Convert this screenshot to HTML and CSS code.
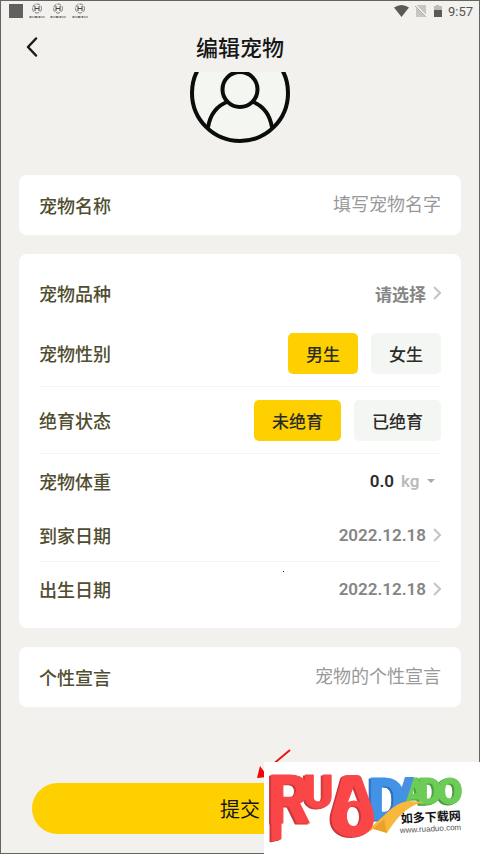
FILE: index.html
```html
<!DOCTYPE html>
<html lang="zh-CN">
<head>
<meta charset="utf-8">
<meta name="viewport" content="width=device-width, initial-scale=1">
<title>编辑宠物</title>
<link rel="stylesheet" href="styles.css">
</head>
<body>
<div class="screen">
  <div class="status">
    <svg class="status-left" width="84" height="18" viewBox="0 0 84 18" aria-hidden="true">
      <rect x="1" y="2" width="14" height="14" fill="#60605e"/>
      <g fill="none" stroke="#777" stroke-width="1">
        <g id="face">
          <circle cx="29" cy="6.500" r="4.500" stroke-dasharray="4 1"/>
          <path d="M27 4v5M31 4v5M27 6.500h4" stroke="#444"/>
          <path d="M21.500 15h15" stroke-dasharray="2 1 1 1 3 1" stroke="#777" stroke-width="2"/>
        </g>
        <use href="#face" x="21"/>
        <use href="#face" x="43"/>
      </g>
    </svg>
    <div class="status-right">
      <svg width="50" height="14" viewBox="0 0 50 14" aria-hidden="true">
        <path d="M1 3.500Q8.500 -1.500 16 3.500L8.500 13Z" fill="#5a5a58"/>
        <path d="M23 1h10v12H23z" fill="#c6c6c3"/>
        <path d="M22 1l12 12" stroke="#f2f1ee" stroke-width="2"/>
        <path d="M22 2l11 11" stroke="#aaa" stroke-width="1"/>
        <path d="M41 2h2V1h3v1h3v5h-8z" fill="#bbbbb8"/>
        <path d="M41 6h8v7h-8z" fill="#5a5a58"/>
      </svg>
      <span>9:57</span>
    </div>
  </div>
  <header class="topbar">
    <button class="back" type="button" aria-label="返回">
      <svg width="12" height="20" viewBox="0 0 12 20"><path d="M10 1.500L2 10l8 8.500" fill="none" stroke="#1b1b1b" stroke-width="2.500" stroke-linecap="round" stroke-linejoin="round"/></svg>
    </button>
    <h1>编辑宠物</h1>
  </header>
  <form class="form">
    <svg class="avatar" width="100" height="72" viewBox="190 72 100 72" role="img" aria-label="头像">
      <circle cx="240" cy="93" r="48" fill="#f3f6f1"/>
      <g fill="none" stroke="#0c0c0a" stroke-width="4">
        <circle cx="240" cy="93" r="48"/>
        <circle cx="240" cy="89.500" r="17.500"/>
        <path d="M208 127.500C210 115 216 106 228 101.500M272 127.500C270 115 264 106 252 101.500"/>
      </g>
    </svg>
    <section class="card single">
      <label for="name">宠物名称</label>
      <input id="name" type="text" placeholder="填写宠物名字">
    </section>
    <section class="card group">
      <div class="row">
        <span class="label">宠物品种</span>
        <button class="pick" type="button">请选择
          <svg class="chev" width="8" height="14" viewBox="0 0 8 14"><path d="M1 1l6 6-6 6"/></svg></button>
      </div>
      <div class="row tall lined">
        <span class="label">宠物性别</span>
        <div class="choices">
          <button class="choice on" type="button">男生</button>
          <button class="choice" type="button">女生</button>
        </div>
      </div>
      <div class="row tall lined">
        <span class="label">绝育状态</span>
        <div class="choices">
          <button class="choice on" type="button">未绝育</button>
          <button class="choice" type="button">已绝育</button>
        </div>
      </div>
      <div class="row">
        <label for="weight">宠物体重</label>
        <div class="weight">
          <input id="weight" type="text" value="0.0">
          <select aria-label="单位"><option>kg</option></select>
          <svg width="8" height="4" viewBox="0 0 8 4" aria-hidden="true"><path d="M0 0h8L4 4z" fill="#aaa"/></svg>
        </div>
      </div>
      <div class="row lined">
        <span class="label">到家日期</span>
        <button class="pick" type="button">2022.12.18
          <svg class="chev" width="8" height="14" viewBox="0 0 8 14"><path d="M1 1l6 6-6 6"/></svg></button>
      </div>
      <div class="row">
        <span class="label">出生日期</span>
        <button class="pick" type="button">2022.12.18
          <svg class="chev" width="8" height="14" viewBox="0 0 8 14"><path d="M1 1l6 6-6 6"/></svg></button>
      </div>
    </section>
    <section class="card single">
      <label for="motto">个性宣言</label>
      <input id="motto" type="text" placeholder="宠物的个性宣言">
    </section>
    <button class="submit" type="submit">提交</button>
  </form>
  <i class="dot"></i>
</div>
<div class="overlay">
  <svg class="arrow" width="36" height="30" viewBox="0 0 36 30" aria-hidden="true">
    <path d="M34 1L9 22" stroke="#e81717" stroke-width="2"/>
    <path d="M1 29L4 17l8 11z" fill="#f00808"/>
  </svg>
  <svg class="brand" width="216" height="92" viewBox="0 0 216 92" role="img" aria-label="如多下载网">
    <rect width="216" height="92" fill="#fff"/>
    <g class="solid green">
      <text x="154" y="42" font-size="37">D</text>
      <text x="173" y="42" font-size="37">O</text>
    </g>
    <g class="solid green"><text x="138" y="42" font-size="37">A</text></g>
    <path d="M131 47L141 15h9l-8 25-6 6z" fill="#4a90e2"/>
    <g class="solid blue"><text x="104" y="58" font-size="59">D</text></g>
    <path d="M84 74C113 72 122 41 145 39L160 40C140 44 130 61 123 71L111 66Q100 74 84 74Z" fill="#f8b83c"/>
    <path d="M109 67l11-10 3 14z" fill="#e9a22b"/>
    <g class="solid red">
      <text x="39" y="46" font-size="46">U</text>
      <text x="4" y="61" font-size="66">R</text>
      <path d="M8 50h9v27l-9 2z"/>
      <path stroke="none" fill-rule="evenodd" d="M78 16Q79 13 83 13H93Q97 13 98 17L108 45C114 63 106 75 89 75C72 75 64 63 69 48ZM90 24L84 40Q90 37 96 40ZM90 44C85 44 83 49 83 54S85 64 90 64S97 59 97 54S95 44 90 44Z"/>
    </g>
    <text class="cn" x="137" y="61" transform="rotate(-3 137 61)">如多下载网</text>
    <text class="url" x="136" y="71" transform="rotate(-3 136 71)">www.ruaduo.com</text>
  </svg>
</div>
</body>
</html>
```
FILE: styles.css
```css
* { box-sizing: border-box; }
body {
  margin: 0;
  position: relative;
  background: #f2f1ee;
  font-family: Roboto, "Noto Sans CJK SC", sans-serif;
  color: #2b2b28;
}
button, input, select {
  font: inherit;
  color: inherit;
  border: 0;
  padding: 0;
  margin: 0;
  background: none;
}
.screen {
  position: relative;
  min-height: 100vh;
  border: 1px solid #666462;
}
.status {
  display: flex;
  justify-content: space-between;
  align-items: center;
  height: 20px;
  padding: 0 6px 0 7px;
}
.status-right { display: flex; align-items: center; gap: 5px; font-size: 13px; color: #555; }
.topbar {
  position: relative;
  display: flex;
  align-items: center;
  justify-content: center;
  height: 51px;
  padding-top: 4px;
}
.back { position: absolute; left: 25px; top: 16px; display: flex; }
h1 { margin: 0; font-size: 22px; line-height: 32px; font-weight: 500; color: #161616; }
.form { display: flex; flex-direction: column; padding: 0 18px 19px; }
.avatar { display: block; align-self: center; margin-bottom: 31px; }
.card { background: #fff; border-radius: 8px; padding: 0 20px; margin-bottom: 19px; }
.single { display: flex; align-items: center; justify-content: space-between; height: 60px; }
.single input { flex: 1; min-width: 0; text-align: right; font-size: 18px; height: 40px; margin-bottom: 2px; }
.single input::placeholder { color: #999; opacity: 1; font-weight: 400; }
.group { padding-top: 12px; padding-bottom: 12px; }
.row { display: flex; align-items: center; justify-content: space-between; height: 54px; }
.tall { height: 67px; }
.lined { border-bottom: 1px solid #f5f5f5; }
.label, label { font-size: 18px; font-weight: 500; color: #504d30; }
.pick { display: flex; align-items: center; gap: 7px; font-size: 17px; font-weight: 600; color: #858585; }
.chev path { fill: none; stroke: #c4c4c4; stroke-width: 2; }
.choices { display: flex; gap: 13px; }
.choice {
  height: 41px;
  padding: 0 18px;
  border-radius: 5px;
  background: #f4f6f3;
  font-size: 17px;
  font-weight: 500;
}
.on { background: #fed000; }
.weight { display: flex; align-items: center; gap: 7px; padding-right: 6px; font-size: 17px; font-weight: 600; }
.weight input { width: 32px; text-align: right; }
.weight select { appearance: none; color: #bbb; }
.submit {
  height: 51px;
  margin: 57px 13px 0;
  border-radius: 26px;
  background: #fed000;
  font-size: 20px;
  color: #161616;
}
.dot { position: absolute; left: 282px; top: 570px; width: 1px; height: 1px; background: #222; }
.overlay { position: absolute; right: 0; bottom: 0; }
.arrow { position: absolute; left: -8px; top: -13px; }
.brand { position: relative; display: block; overflow: visible; }
.solid { font-family: Roboto, sans-serif; font-weight: 900; stroke-width: 1; stroke-linejoin: round; }
.red { fill: #fa4647; stroke: #fa4647; filter: drop-shadow(-2px 1px 0 #c9383c); }
.blue { fill: #4292e6; stroke: #4292e6; filter: drop-shadow(-2px 1px 0 #2e6cb8); }
.green { fill: #6dcc57; stroke: #6dcc57; filter: drop-shadow(-2px 1px 0 #459d3f); }
.cn { font: 700 12px "Noto Sans CJK SC", sans-serif; fill: #111; }
.url { font: 8px "Liberation Sans", sans-serif; fill: #555; }
```
